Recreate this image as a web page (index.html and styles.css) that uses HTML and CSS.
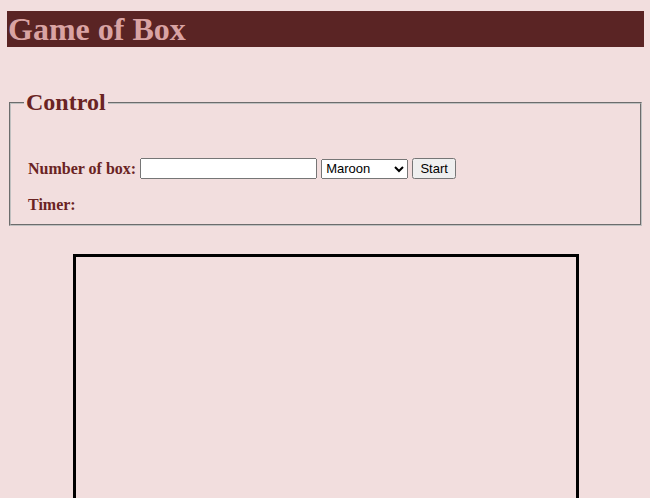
FILE: index.html
```html
<!DOCTYPE html>
<html>
<head>
<meta charset="utf-8">
<title>Game of Box</title>
<link rel="stylesheet" href="styles.css">
</head>
<body>
<h1 class="title">Game of Box</h1>
<fieldset class="control">
  <legend class="control-legend">Control</legend>
  <div class="row">
    <label class="lbl" for="num">Number of box:</label>
    <input class="num-input" id="num" type="text">
    <select class="color-select">
      <option>Maroon</option>
      <option>Red</option>
      <option>Blue</option>
    </select>
    <button class="start-btn" type="button">Start</button>
  </div>
  <div class="row timer-row">
    <span class="lbl">Timer:</span>
  </div>
</fieldset>
<div class="board"></div>
</body>
</html>
```
FILE: styles.css
```css
html, body {
  margin: 0;
  padding: 0;
}
body {
  background: #f2dede;
  font-family: "Liberation Serif", "Times New Roman", serif;
  overflow: hidden;
}
.title {
  margin: 11px 6px 0 7px;
  height: 36px;
  line-height: 36px;
  font-size: 32px;
  font-weight: bold;
  background: #5a2424;
  color: #d9a3a3;
  padding-left: 1px;
}
.control {
  margin: 42px 8px 0 9px;
  padding: 0 13px 9px;
  border: 2px groove #c0c0c0;
}
.control-legend {
  font-size: 24px;
  font-weight: bold;
  color: #6a2323;
  padding: 0 2px;
}
.row {
  display: flex;
  align-items: center;
  height: 21px;
  margin-top: 42px;
  padding-left: 4px;
}
.timer-row {
  margin-top: 15px;
}
.lbl {
  font-size: 16px;
  font-weight: bold;
  color: #6a2323;
  margin-right: 4px;
}
.num-input {
  box-sizing: border-box;
  width: 177px;
  height: 21px;
  margin: 0 4px 0 0;
  font-family: "Liberation Sans", Arial, sans-serif;
  font-size: 13px;
}
.color-select {
  box-sizing: border-box;
  width: 87px;
  height: 20px;
  margin: 0 4px 0 0;
  font-family: "Liberation Sans", Arial, sans-serif;
  font-size: 13px;
}
.start-btn {
  box-sizing: border-box;
  width: 44px;
  height: 21px;
  margin: 0;
  padding: 0;
  font-family: "Liberation Sans", Arial, sans-serif;
  font-size: 13px;
}
.board {
  width: 500px;
  height: 400px;
  border: 3px solid #000;
  margin: 28px 0 0 73px;
}
```
